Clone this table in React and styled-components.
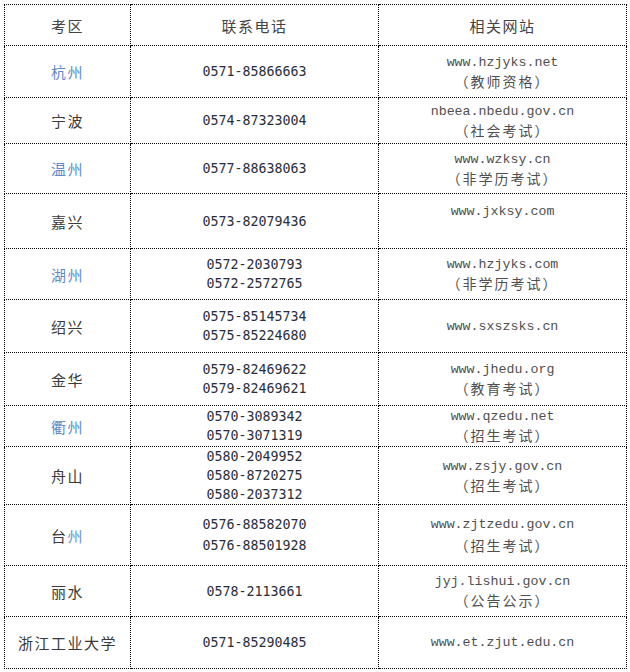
import React from 'react';
import styled, { createGlobalStyle } from 'styled-components';

const GlobalStyle = createGlobalStyle`
  html, body {
    margin: 0;
    padding: 0;
    background: #fff;
    overflow: hidden;
  }
  body {
    font-family: "Noto Sans CJK SC", "Liberation Serif", serif;
  }
`;

const rows = [
  { city: '杭州', blue: true, phones: ['0571-85866663'], site: 'www.hzjyks.net', note: '（教师资格）', h: 52 },
  { city: '宁波', phones: ['0574-87323004'], site: 'nbeea.nbedu.gov.cn', note: '（社会考试）', h: 46 },
  { city: '温州', blue: true, phones: ['0577-88638063'], site: 'www.wzksy.cn', note: '（非学历考试）', h: 50 },
  { city: '嘉兴', phones: ['0573-82079436'], site: 'www.jxksy.com', note: '\u00a0', h: 55 },
  { city: '湖州', blue: true, phones: ['0572-2030793', '0572-2572765'], site: 'www.hzjyks.com', note: '（非学历考试）', h: 51 },
  { city: '绍兴', phones: ['0575-85145734', '0575-85224680'], site: 'www.sxszsks.cn', h: 53 },
  { city: '金华', phones: ['0579-82469622', '0579-82469621'], site: 'www.jhedu.org', note: '（教育考试）', h: 53 },
  { city: '衢州', blue: true, phones: ['0570-3089342', '0570-3071319'], site: 'www.qzedu.net', note: '（招生考试）', h: 41 },
  { city: '舟山', phones: ['0580-2049952', '0580-8720275', '0580-2037312'], site: 'www.zsjy.gov.cn', note: '（招生考试）', h: 58 },
  { city: '台州', tail: true, phones: ['0576-88582070', '0576-88501928'], site: 'www.zjtzedu.gov.cn', note: '（招生考试）', h: 61, lh: 21 },
  { city: '丽水', phones: ['0578-2113661'], site: 'jyj.lishui.gov.cn', note: '（公告公示）', h: 51 },
  { city: '浙江工业大学', phones: ['0571-85290485'], site: 'www.et.zjut.edu.cn', h: 52 },
];

const Page = styled.div`
  padding: 4px 0 0 4px;
  width: 622px;
`;

const Table = styled.table`
  border-collapse: collapse;
  table-layout: fixed;
  width: 622px;
  td, th {
    border: 1px dotted #000;
    padding: 0;
    text-align: center;
    vertical-align: middle;
  }
`;

const Row = styled.tr`
  height: ${(p) => p.$h}px;
  line-height: ${(p) => p.$lh || 19}px;
`;

const Head = styled.th`
  font-weight: normal;
  font-size: 15px;
  letter-spacing: 1.5px;
  color: #444;
`;

const CityCell = styled.td`
  font-size: 15px;
  letter-spacing: 1.5px;
  color: ${(p) => (p.$blue ? '#5f8cc4' : '#3a3a3a')};
`;

const Light = styled.span`
  color: #6d95c8;
`;

const PhoneCell = styled.td`
  font-family: "DejaVu Sans Mono", "Liberation Mono", monospace;
  font-size: 13.3px;
  color: #2a2e3a;
`;

const SiteCell = styled.td`
  color: #4f4f4f;
`;

const Url = styled.div`
  font-family: "Liberation Mono", monospace;
  font-size: 13.3px;
`;

const Note = styled.div`
  font-size: 14px;
  letter-spacing: 2px;
`;

export default function App() {
  return (
    <>
      <GlobalStyle />
      <Page>
        <Table>
          <colgroup>
            <col style={{ width: 126 }} />
            <col style={{ width: 248 }} />
            <col style={{ width: 248 }} />
          </colgroup>
          <tbody>
            <Row $h={41}>
              <Head>考区</Head>
              <Head>联系电话</Head>
              <Head>相关网站</Head>
            </Row>
            {rows.map((r) => (
              <Row key={r.city} $h={r.h} $lh={r.lh}>
                <CityCell $blue={r.blue}>
                  {r.tail ? (
                    <>
                      {r.city[0]}
                      <Light>{r.city[1]}</Light>
                    </>
                  ) : (
                    r.city
                  )}
                </CityCell>
                <PhoneCell>
                  {r.phones.map((p) => (
                    <div key={p}>{p}</div>
                  ))}
                </PhoneCell>
                <SiteCell>
                  <Url>{r.site}</Url>
                  {r.note && <Note>{r.note}</Note>}
                </SiteCell>
              </Row>
            ))}
          </tbody>
        </Table>
      </Page>
    </>
  );
}
